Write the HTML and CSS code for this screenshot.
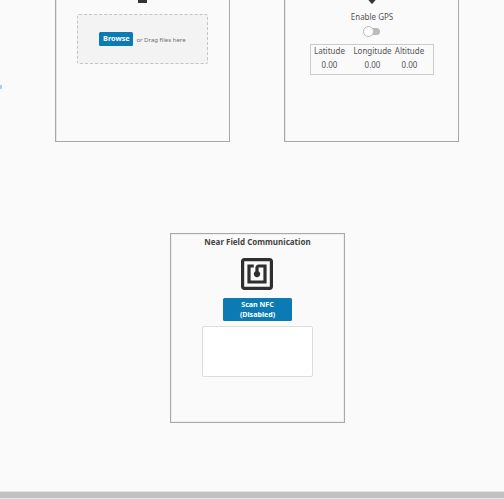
FILE: index.html
```
<!DOCTYPE html>
<html lang="en">
<head>
<meta charset="utf-8">
<title>Device Inputs</title>
<link rel="stylesheet" href="styles.css">
</head>
<body>
<main class="page">
  <div class="row">
    <span class="marker"></span>
    <section class="card card-top">
      <span class="upload-stem"></span>
      <div class="dropzone">
        <button class="button browse">Browse</button>
        <span class="hint">or Drag files here</span>
      </div>
    </section>
    <section class="card card-top">
      <svg class="pin" viewBox="0 0 10 5"><path d="M1.4 0h7.2L5.6 3.4Q5 4.1 4.4 3.4z"/></svg>
      <div class="gps-label">Enable GPS</div>
      <div class="toggle"><span class="knob"></span></div>
      <div class="coords">
        <span>Latitude</span><span>Longitude</span><span>Altitude</span>
        <span>0.00</span><span>0.00</span><span>0.00</span>
      </div>
    </section>
  </div>
  <section class="card card-nfc">
    <h2 class="title">Near Field Communication</h2>
    <svg class="nfc" viewBox="2 2 20 20"><path d="M20 2H4c-1.1 0-2 .9-2 2v16c0 1.1.9 2 2 2h16c1.1 0 2-.9 2-2V4c0-1.1-.9-2-2-2zm0 18H4V4h16v16zM18 6h-5c-1.1 0-2 .9-2 2v2.28c-.6.35-1 .98-1 1.72 0 1.1.9 2 2 2s2-.9 2-2c0-.74-.4-1.38-1-1.72V8h3v8H8V8h2V6H6v12h12V6z"/></svg>
    <button class="button scan">Scan NFC<br>(Disabled)</button>
    <div class="output"></div>
  </section>
  <footer class="bar"></footer>
</main>
</body>
</html>
```
FILE: styles.css
```
* { box-sizing: border-box; }
body {
  margin: 0;
  background: #fafafa;
  color: #555;
  font-family: "Noto Sans", sans-serif;
  font-size: 8px;
  line-height: 10px;
}
.page {
  display: flex;
  flex-direction: column;
  height: 499px;
  overflow: hidden;
}
.row { display: flex; height: 142px; }
.marker {
  width: 2px;
  height: 4px;
  margin: 85px 53px 0 0;
  background: #a3d3e8;
}
.card {
  display: flex;
  flex-direction: column;
  align-items: center;
  flex: none;
  width: 175px;
  border: 1px solid #a8a8a8;
  box-shadow: inset 0 0 0 1px #efefef;
  white-space: nowrap;
}
.card-top { border-top: 0; box-shadow: inset 1px 0 #e6e6e6; }
.card-top + .card-top { margin-left: 54px; }
.upload-stem { width: 9px; height: 3px; background: #333; }
.dropzone {
  display: flex;
  align-items: center;
  justify-content: center;
  gap: 3px;
  width: 131px;
  height: 50px;
  margin-top: 11px;
  border: 1px dashed #c4c4c4;
  border-radius: 2px;
  background: #f3f3f3;
}
.button {
  padding: 0;
  border: 0;
  border-radius: 1.5px;
  background: #0c7bb3;
  color: #fff;
  font: bold 7.1px/9.5px "Noto Sans", sans-serif;
}
.browse { width: 34px; height: 14px; font-size: 7.3px; }
.hint { padding-top: 1px; font-size: 6.05px; color: #707070; }
.pin { width: 10px; height: 5px; fill: #333; }
.gps-label { margin: 7px 0 0 1px; }
.toggle {
  display: flex;
  align-items: center;
  width: 13px;
  height: 7px;
  margin: 6px 0 0 4px;
  border-radius: 4px;
  background: #bbb;
}
.knob {
  flex: none;
  width: 11px;
  height: 11px;
  margin-left: -4px;
  border: 1px solid #bbb;
  border-radius: 50%;
  background: #fff;
}
.coords {
  display: grid;
  grid-template-columns: 38px 48px 26px;
  grid-template-rows: 12px 16px;
  justify-items: center;
  align-items: center;
  width: 124px;
  height: 31px;
  margin-top: 9px;
  border: 1px solid #ccc;
}
.card-nfc { height: 190px; margin: 91px 0 0 170px; }
.title {
  margin: 3px 0 0;
  font-size: 8px;
  line-height: 10px;
  color: #444;
}
.nfc { width: 32px; height: 32px; margin: 11px 1px 0 0; fill: #2f2f2f; }
.scan { width: 69px; height: 23px; margin: 8px 0 0; }
.output {
  width: 111px;
  height: 51px;
  margin-top: 5px;
  border: 1px solid #ddd;
  border-radius: 2px;
  background: #fff;
}
.bar {
  height: 8px;
  margin-top: 68px;
  background: #c1c1c1;
  border: solid #e3e3e3;
  border-width: 1px 0;
}
```
